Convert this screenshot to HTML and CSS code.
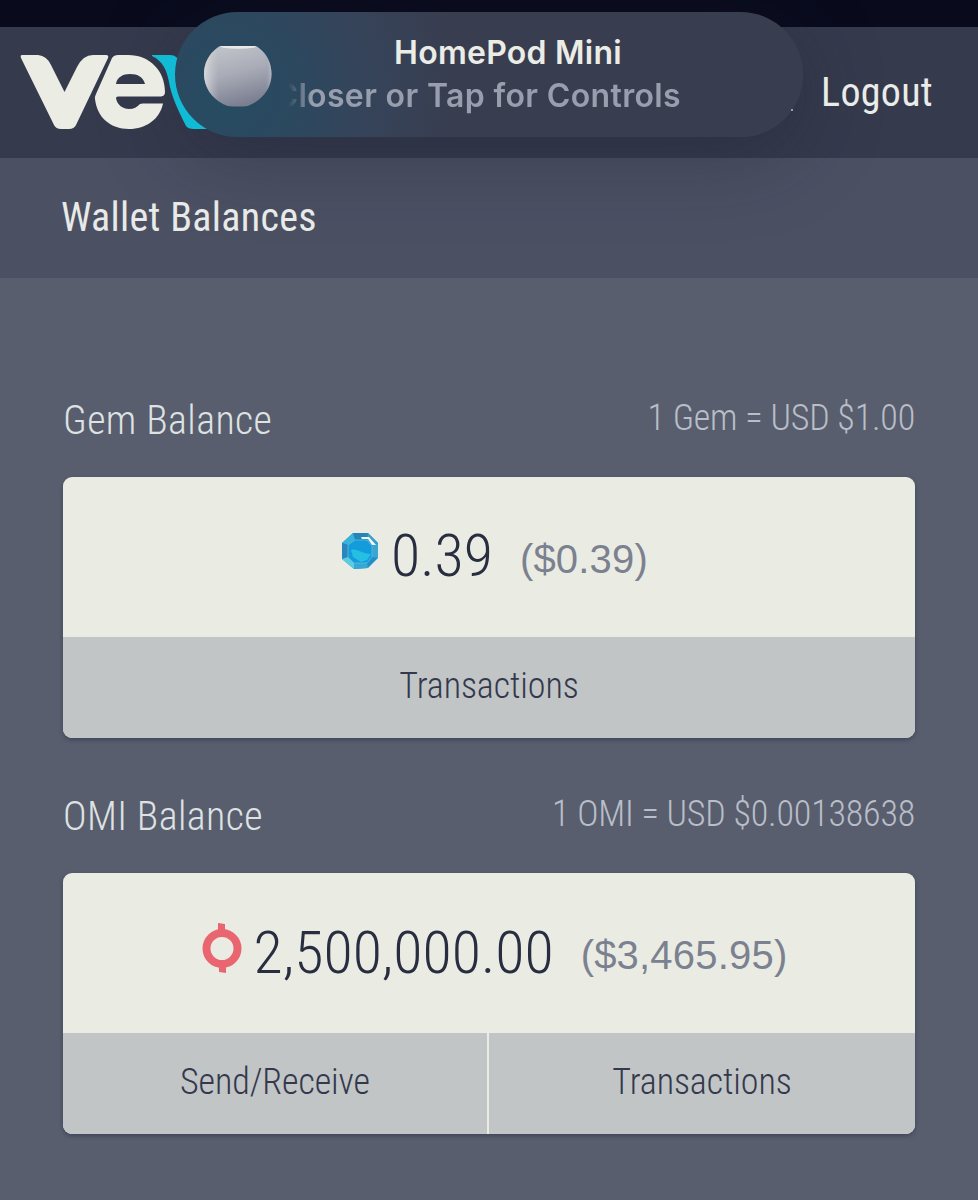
FILE: index.html
```html
<!DOCTYPE html>
<html lang="en">
<head>
<meta charset="utf-8">
<title>Wallet Balances</title>
<link rel="stylesheet" href="styles.css">
</head>
<body>
<div class="status-bar"></div>
<header class="topbar">
  <svg class="logo" width="200" height="80" viewBox="0 0 200 80" aria-label="VeVe">
    <path class="logo-light" d="M2 0H18Q27 1 31 10L44.500 37L57 12Q63 0 73 0H86Q89 0 88 3L56 70Q54 74 49 74H41Q36 74 34 70L1 3Q0 0 2 0Z"/>
    <path class="logo-light" fill-rule="evenodd" d="M92 3Q94 0 98 0H108C130 0 145 16 145 37Q145 41 141 41.500H98Q96 41.500 96 43C97 50 103 54 109 54C114 54 117 52 120 49Q121 48.500 123 48.500H143C140 64 126 74 109 74C90 74 77 62 75 44Q74.500 42 76 39ZM96 29H125C123 22 118 19 110 19C103 19 97 22 96 29Z"/>
    <path class="logo-cyan" d="M132 0H150Q158 0 160 9C164 30 175 55 195 74H174Q168 74 166 71C158 55 151 40 149 27C147 16 143 6 132 1Z"/>
  </svg>
  <a class="logout condensed">Logout</a>
</header>
<div class="notice-shadow"></div>
<div class="notice">
  <svg class="pod" width="72" height="66" viewBox="0 0 72 66">
    <defs>
      <linearGradient id="pod" x1="0.3" y1="0" x2="0.6" y2="1"><stop offset="0" stop-color="#c0c3c8"/><stop offset=".45" stop-color="#a9acb7"/><stop offset="1" stop-color="#777b8d"/></linearGradient>
      <linearGradient id="edge" x1="0" x2="1"><stop offset="0" stop-color="#e8e9e8" stop-opacity=".7"/><stop offset=".22" stop-color="#c9cbd0" stop-opacity="0"/><stop offset=".9" stop-color="#8c90a0" stop-opacity="0"/><stop offset="1" stop-color="#d5d7da" stop-opacity=".5"/></linearGradient>
    </defs>
    <path d="M19 2H53Q55 2 57 4C65 10 69.500 19 69.500 30C69.500 43 62 54 50 60Q46 62.500 41 62.500H31Q25 62.500 21 60C9.500 54 2 43 2 30C2 19 7 10 15 4Q17 2 19 2Z" fill="url(#pod)"/>
    <path d="M19 2H53Q55 2 57 4C65 10 69.500 19 69.500 30C69.500 43 62 54 50 60Q46 62.500 41 62.500H31Q25 62.500 21 60C9.500 54 2 43 2 30C2 19 7 10 15 4Q17 2 19 2Z" fill="url(#edge)"/>
    <path d="M18 2H54L53 3.500Q36 6 20 3.500Z" fill="#e9eae8"/>
  </svg>
  <div class="notice-text">
    <div class="notice-title">HomePod Mini</div>
    <div class="notice-sub"><span>Closer or Tap for Controls</span></div>
  </div>
</div>
<div class="heading"><h1 class="condensed">Wallet Balances</h1></div>
<main>
  <section>
    <div class="row"><h2 class="condensed">Gem Balance</h2><span class="rate condensed">1 Gem = USD $1.00</span></div>
    <div class="card">
      <div class="amount">
        <svg class="gem" width="38" height="38" viewBox="0 0 38 38">
          <path d="M12 1H27L37 11V26L27 36L13 37L1 27V11Z" fill="#218fc8"/>
          <path d="M12 1L14 8L27 8L27 1Z" fill="#2685b8"/><path d="M27 1L37 11L31 13L26 8Z" fill="#3a9ecb"/><path d="M1 11L12 1L14 8L7 13Z" fill="#38b3da"/><path d="M1 11L7 13L7 25L1 27Z" fill="#2a86bb"/><path d="M1 27L7 25L13 31L13 37Z" fill="#5bcde2"/><path d="M13 37V31H26L27 36Z" fill="#35a8d3"/><path d="M37 11L31 14V25L37 26Z" fill="#3aa6d2"/>
          <path d="M14 8H26L31 14V25L26 31H13L7 25V13Z" fill="#129cdc" stroke="#62bbdc" stroke-width=".8"/>
          <path d="M10 18C16 16 21 22 30 22L26 28L20 30L12 25Z" fill="#24bfe2"/>
          <path d="M20 5H28L35 13H31L27 7H21Z" fill="#effaf8"/>
        </svg>
        <span class="value condensed">0.39</span><span class="usd">($0.39)</span>
      </div>
      <div class="actions"><a class="condensed">Transactions</a></div>
    </div>
  </section>
  <section>
    <div class="row"><h2 class="condensed">OMI Balance</h2><span class="rate condensed">1 OMI = USD $0.00138638</span></div>
    <div class="card">
      <div class="amount omi">
        <svg class="coin" width="40" height="50" viewBox="0 0 40 50">
          <circle cx="20" cy="25.500" r="15.500" fill="none" stroke="#e9656f" stroke-width="8"/>
          <path d="M16 0L23 1V8H16ZM17 43H24V50L17 49Z" fill="#e9656f"/>
        </svg>
        <span class="value condensed">2,500,000.00</span><span class="usd">($3,465.95)</span>
      </div>
      <div class="actions split"><a class="condensed">Send/Receive</a><a class="condensed">Transactions</a></div>
    </div>
  </section>
</main>
</body>
</html>
```
FILE: styles.css
```css
* { box-sizing: border-box; }
body { margin: 0; width: 978px; height: 1200px; overflow: hidden; position: relative; background: #585e6e; font-family: Roboto, "Liberation Sans", sans-serif; display: flex; flex-direction: column; }
.condensed { font-family: "Roboto Condensed", Roboto, sans-serif; font-stretch: 75%; }
h1, h2 { margin: 0; }
.status-bar { height: 27px; background: #090b1d; flex: none; }
.topbar { height: 131px; flex: none; background: #363a4d; display: flex; justify-content: space-between; padding: 28px 45px 0 20px; }
.logo, .logout, h1 { position: relative; z-index: 1; }
.logo-light { fill: #ebece4; }
.logo-cyan { fill: #12bbd5; }
.logout { color: #e9ece9; font-size: 40px; line-height: 47px; padding-top: 14px; letter-spacing: .3px; }
.notice, .notice-shadow { position: absolute; left: 175px; top: 12px; width: 628px; height: 125px; border-radius: 63px; }
.notice-shadow { box-shadow: 0 18px 80px rgba(24, 30, 50, .36); }
.notice { z-index: 2; display: flex; padding: 32px 0 0 27px; background: radial-gradient(circle at 50px 80px, #264c62 0, #2c485f 75px, #35445a 140px, #393d50 235px); font-family: Inter, sans-serif; }
.notice::after { content: ""; position: absolute; left: 616px; top: 97px; width: 2px; height: 2px; background: #9b9ea8; }
.pod { flex: none; }
.notice-text { width: 468px; margin-top: -12px; text-align: center; color: #ebece6; }
.notice-title { font-size: 32px; line-height: 42px; font-weight: 600; letter-spacing: .25px; }
.notice-sub { width: 397px; margin-left: 10px; display: flex; justify-content: flex-end; overflow: hidden; white-space: nowrap; font-size: 32px; line-height: 44px; font-weight: 560; letter-spacing: .35px; color: #989eae; -webkit-mask-image: linear-gradient(90deg, transparent 4px, #000 28px); mask-image: linear-gradient(90deg, transparent 4px, #000 28px); }
.heading { height: 120px; flex: none; background: #4c5063; padding: 36px 61px; }
.heading h1 { font-size: 40px; line-height: 48px; font-weight: 400; color: #e7eae6; letter-spacing: .3px; }
main { padding: 119px 63px 0; display: flex; flex-direction: column; gap: 55px; }
.row { height: 80px; display: flex; justify-content: space-between; }
h2 { font-size: 40px; line-height: 48px; font-weight: 300; color: #dfe2e2; letter-spacing: .4px; }
.rate { font-size: 36px; line-height: 42px; font-weight: 300; color: #b9bec8; letter-spacing: -.2px; }
.card { height: 261px; border-radius: 9px; overflow: hidden; background: #eaece3; box-shadow: 0 2px 4px #40445a; display: flex; flex-direction: column; }
.amount { height: 160px; display: flex; justify-content: center; padding-left: 11px; color: #282d40; }
.value { font-size: 60px; line-height: 70px; font-weight: 300; margin-top: 44px; }
.omi .value { margin-top: 45px; }
.gem { margin-top: 55px; margin-right: 12px; }
.coin { margin-top: 50px; margin-right: 12px; }
.usd { font: 40px "Liberation Sans", sans-serif; line-height: 46px; margin: 59px 0 0 27px; color: #7c8190; letter-spacing: .2px; }
.actions { flex: 1; display: flex; }
.actions.split { display: grid; grid-template-columns: 424px 1fr; gap: 2px; }
.actions a { flex: 1; text-align: center; background: #c1c5c6; color: #34384d; font-size: 36px; font-weight: 300; line-height: 98px; letter-spacing: -.1px; }
```
